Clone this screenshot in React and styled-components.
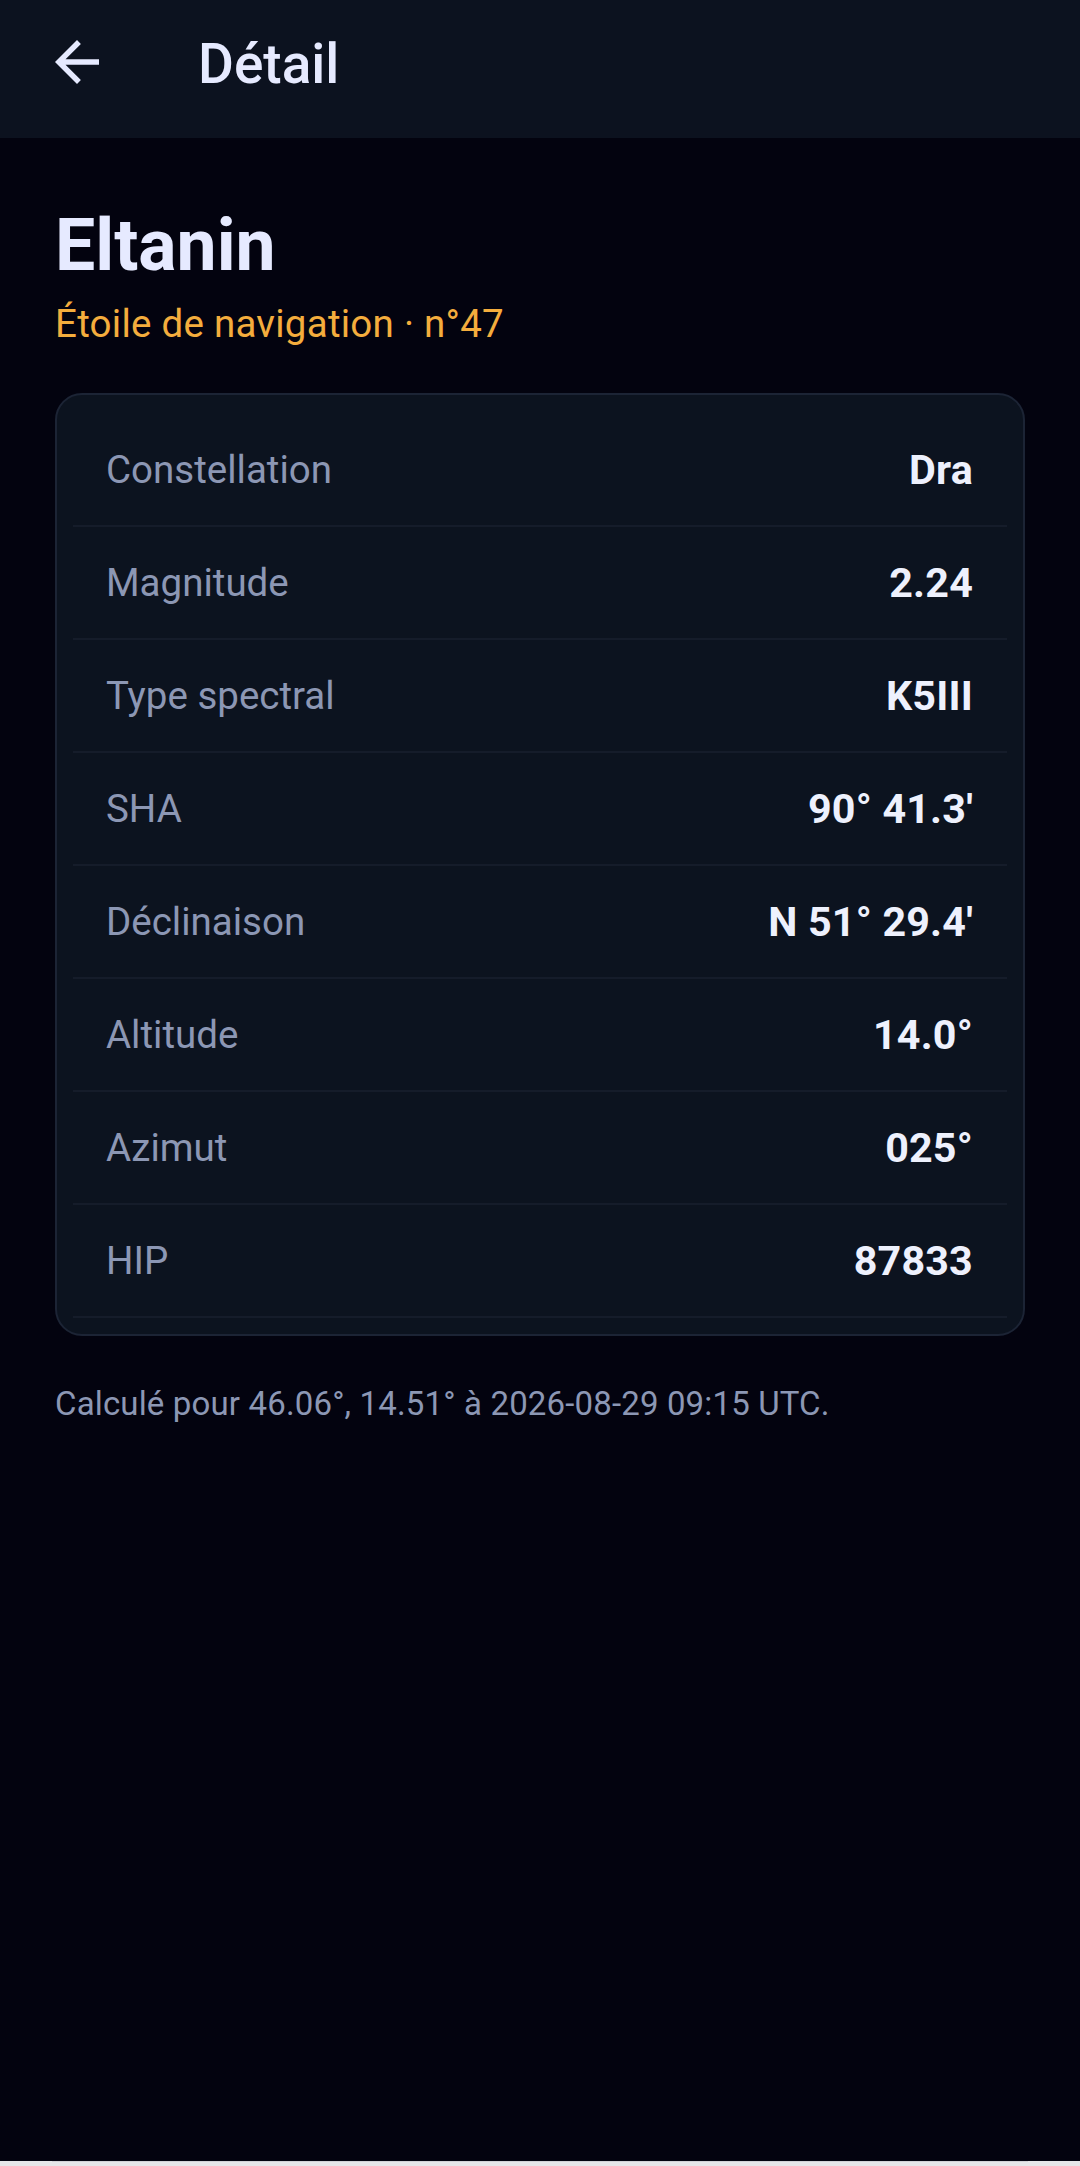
import React from "react";
import styled, { createGlobalStyle } from "styled-components";

const GlobalStyle = createGlobalStyle`
  html, body {
    margin: 0;
    padding: 0;
    background: #e6e6e8;
  }
  body {
    font-family: Roboto, "Noto Sans", "Liberation Sans", sans-serif;
    -webkit-font-smoothing: antialiased;
  }
  * { box-sizing: border-box; }
`;

const Screen = styled.div`
  min-height: 2161px;
  background: #03030f;
  display: flex;
  flex-direction: column;
`;

const BottomEdge = styled.div`
  height: 1px;
  margin: 0 52px;
  background: #d2d2d6;
`;

const TopBar = styled.header`
  height: 138px;
  background: #0c121f;
  display: flex;
  align-items: center;
  padding: 0 0 10px 44px;
  gap: 88px;
`;

const IconButton = styled.button`
  width: 66px;
  height: 66px;
  padding: 0;
  margin-bottom: 4px;
  border: none;
  background: transparent;
  color: #e6eaff;
  display: flex;
  align-items: center;
  justify-content: center;
  cursor: pointer;
`;

const BarTitle = styled.h1`
  margin: 0;
  font-size: 55px;
  font-weight: 500;
  color: #e6eaff;
  line-height: normal;
`;

const Content = styled.main`
  padding: 66px 55px 0;
  display: flex;
  flex-direction: column;
`;

const StarName = styled.h2`
  margin: 0;
  font-size: 71.5px;
  font-weight: 700;
  color: #e6eaff;
  line-height: normal;
`;

const Subtitle = styled.div`
  margin-top: 14px;
  font-size: 38.5px;
  letter-spacing: 0.25px;
  color: #f4ad3d;
  line-height: normal;
`;

const Card = styled.section`
  margin-top: 47px;
  background: #0c131f;
  border: 2px solid #1c2435;
  border-radius: 27px;
  padding: 19px 16px 16px;
  display: flex;
  flex-direction: column;
`;

const Row = styled.div`
  height: 113px;
  display: flex;
  align-items: center;
  justify-content: space-between;
  padding: 0 34px 0 33px;
  border-bottom: 2px solid #151c2a;
`;

const Label = styled.span`
  font-size: 38.5px;
  color: #8c97b4;
  line-height: normal;
`;

const Value = styled.span`
  font-size: 41.25px;
  font-weight: 700;
  letter-spacing: 0.2px;
  color: #eef1fd;
  line-height: normal;
`;

const Footnote = styled.p`
  margin: 48px 0 0;
  font-size: 33px;
  letter-spacing: 0.15px;
  color: #8c97b4;
  line-height: normal;
`;

const BackArrow = () => (
  <svg width="66" height="66" viewBox="0 0 24 24" fill="currentColor" aria-hidden="true">
    <path d="M20 11H7.83l5.59-5.59L12 4l-8 8 8 8 1.41-1.41L7.83 13H20v-2z" />
  </svg>
);

const rows = [
  ["Constellation", "Dra"],
  ["Magnitude", "2.24"],
  ["Type spectral", "K5III"],
  ["SHA", "90° 41.3'"],
  ["Déclinaison", "N 51° 29.4'"],
  ["Altitude", "14.0°"],
  ["Azimut", "025°"],
  ["HIP", "87833"],
];

export default function App() {
  return (
    <>
      <GlobalStyle />
      <Screen>
        <TopBar>
          <IconButton aria-label="Retour">
            <BackArrow />
          </IconButton>
          <BarTitle>Détail</BarTitle>
        </TopBar>
        <Content>
          <StarName>Eltanin</StarName>
          <Subtitle>Étoile de navigation · n°47</Subtitle>
          <Card>
            {rows.map(([label, value]) => (
              <Row key={label}>
                <Label>{label}</Label>
                <Value>{value}</Value>
              </Row>
            ))}
          </Card>
          <Footnote>Calculé pour 46.06°, 14.51° à 2026-08-29 09:15 UTC.</Footnote>
        </Content>
      </Screen>
      <BottomEdge />
    </>
  );
}
